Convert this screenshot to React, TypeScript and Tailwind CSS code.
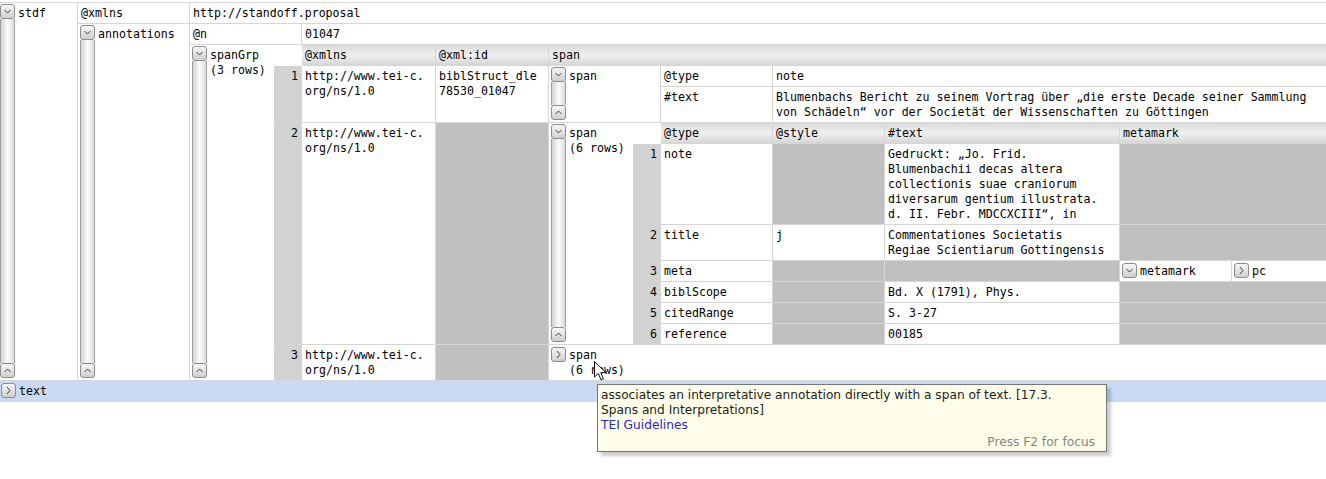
import React from "react";

const ln = "border-[#d6d6d6]";

function Chevron({ dir }: { dir: "down" | "up" | "right" }) {
  const pts =
    dir === "down" ? "3.5,5 6.5,8 9.5,5" : dir === "up" ? "3.5,8 6.5,5 9.5,8" : "5,3 8,6.5 5,10";
  return (
    <svg width="13" height="13" viewBox="0 0 13 13">
      <polyline points={pts} fill="none" stroke="#3c3c3c" strokeWidth="1" />
    </svg>
  );
}

function Btn({ dir }: { dir: "down" | "up" | "right" }) {
  return (
    <div className="w-[15px] h-[15px] shrink-0 rounded-[3px] border border-[#8c8c8c] bg-gradient-to-b from-[#f6f6f6] to-[#d0d0d0] flex items-center justify-center">
      <Chevron dir={dir} />
    </div>
  );
}

function Bar() {
  return (
    <div className="w-[15px] shrink-0 flex flex-col pt-[1px] pb-[2px]">
      <Btn dir="down" />
      <div className="flex-1 border-x border-[#9c9c9c] bg-gradient-to-r from-[#d2d2d2] via-[#fbfbfb] to-[#dcdcdc]" />
      <Btn dir="up" />
    </div>
  );
}

function Elem({ label, sub, className = "" }: { label: string; sub?: string; className?: string }) {
  return (
    <div className={`flex shrink-0 border-b ${ln} ${className}`}>
      <Bar />
      <div className="pl-[3px] pt-[3px] whitespace-nowrap">
        <div>{label}</div>
        {sub && <div>{sub}</div>}
      </div>
    </div>
  );
}

function Collapsed({ label, sub, dir = "right" }: { label: string; sub?: string; dir?: "down" | "right" }) {
  return (
    <div className="flex">
      <div className="pt-[2px] pl-[2px]">
        <Btn dir={dir} />
      </div>
      <div className="pl-[3px] pt-[3px] whitespace-nowrap">
        <div>{label}</div>
        {sub && <div>{sub}</div>}
      </div>
    </div>
  );
}

function Cell({ className = "", children }: { className?: string; children?: React.ReactNode }) {
  return (
    <div className={`border-r border-b ${ln} px-[3px] pt-[3px] pb-[2px] whitespace-nowrap ${className}`}>
      {children}
    </div>
  );
}

function Head({ className = "", children }: { className?: string; children?: React.ReactNode }) {
  return (
    <Cell className={`bg-gradient-to-b from-[#d9d9d9] via-[#efefef] to-[#d6d6d6] ${className}`}>{children}</Cell>
  );
}

function Gray({ className = "" }: { className?: string }) {
  return <div className={`border-r border-b ${ln} bg-[#c0c0c0] ${className}`} />;
}

function Num({ n }: { n: number }) {
  return <Cell className="w-[28px] shrink-0 bg-[#d2d2d2] text-right">{n}</Cell>;
}

function SpanTable() {
  const rows: { t: string; style?: string; text?: React.ReactNode; meta?: boolean }[] = [
    {
      t: "note",
      text: (
        <>
          Gedruckt: „Jo. Frid.
          <br />
          Blumenbachii decas altera
          <br />
          collectionis suae craniorum
          <br />
          diversarum gentium illustrata.
          <br />
          d. II. Febr. MDCCXCIII“, in
        </>
      ),
    },
    {
      t: "title",
      style: "j",
      text: (
        <>
          Commentationes Societatis
          <br />
          Regiae Scientiarum Gottingensis
        </>
      ),
    },
    { t: "meta", meta: true },
    { t: "biblScope", text: "Bd. X (1791), Phys." },
    { t: "citedRange", text: "S. 3-27" },
    { t: "reference", text: "00185" },
  ];
  return (
    <div className="flex-1 flex flex-col">
      <div className="flex">
        <div className="w-[28px] shrink-0" />
        <Head className="w-[112px] shrink-0">@type</Head>
        <Head className="w-[112px] shrink-0">@style</Head>
        <Head className="w-[235px] shrink-0">#text</Head>
        <Head className="flex-1">metamark</Head>
      </div>
      {rows.map((r, i) => (
        <div key={i} className="flex">
          <Num n={i + 1} />
          <Cell className="w-[112px] shrink-0">{r.t}</Cell>
          {r.style ? <Cell className="w-[112px] shrink-0">{r.style}</Cell> : <Gray className="w-[112px] shrink-0" />}
          {r.text ? <Cell className="w-[235px] shrink-0">{r.text}</Cell> : <Gray className="w-[235px] shrink-0" />}
          {r.meta ? (
            <div className="flex-1 flex">
              <div className={`w-[112px] shrink-0 border-r border-b ${ln}`}>
                <Collapsed label="metamark" dir="down" />
              </div>
              <div className={`flex-1 border-r border-b ${ln}`}>
                <Collapsed label="pc" />
              </div>
            </div>
          ) : (
            <Gray className="flex-1" />
          )}
        </div>
      ))}
    </div>
  );
}

function SpanGrpTable() {
  return (
    <div className="flex-1 flex flex-col">
      <div className="flex">
        <div className="w-[28px] shrink-0" />
        <Head className="w-[134px] shrink-0">@xmlns</Head>
        <Head className="w-[113px] shrink-0">@xml:id</Head>
        <Head className="flex-1">span</Head>
      </div>

      <div className="flex">
        <Num n={1} />
        <Cell className="w-[134px] shrink-0">
          http://www.tei-c.
          <br />
          org/ns/1.0
        </Cell>
        <Cell className="w-[113px] shrink-0">
          biblStruct_dle
          <br />
          78530_01047
        </Cell>
        <div className="flex-1 flex">
          <Elem label="span" className={`w-[112px] border-r pl-[2px]`} />
          <div className="flex-1 flex flex-col">
            <div className="flex">
              <Cell className="w-[112px] shrink-0">@type</Cell>
              <Cell className="flex-1">note</Cell>
            </div>
            <div className="flex">
              <Cell className="w-[112px] shrink-0">#text</Cell>
              <Cell className="flex-1">
                Blumenbachs Bericht zu seinem Vortrag über „die erste Decade seiner Sammlung
                <br />
                von Schädeln“ vor der Societät der Wissenschaften zu Göttingen
              </Cell>
            </div>
          </div>
        </div>
      </div>

      <div className="flex">
        <Num n={2} />
        <Cell className="w-[134px] shrink-0">
          http://www.tei-c.
          <br />
          org/ns/1.0
        </Cell>
        <Gray className="w-[113px] shrink-0" />
        <div className="flex-1 flex">
          <Elem label="span" sub="(6 rows)" className="w-[84px] pl-[2px]" />
          <SpanTable />
        </div>
      </div>

      <div className="flex">
        <Num n={3} />
        <Cell className="w-[134px] shrink-0">
          http://www.tei-c.
          <br />
          org/ns/1.0
        </Cell>
        <Gray className="w-[113px] shrink-0" />
        <div className={`flex-1 border-r border-b ${ln}`}>
          <Collapsed label="span" sub="(6 rows)" />
        </div>
      </div>
    </div>
  );
}

export default function App() {
  return (
    <div className="w-[1326px] h-[479px] bg-white relative overflow-hidden text-black font-['DejaVu_Sans_Mono',monospace] text-[11.6px] leading-[15px]">
      <div className={`w-[1327px] mt-[2px] border-t ${ln}`}>
        <div className="flex">
          <Elem label="stdf" className="w-[78px] border-r" />
          <div className="flex-1 flex flex-col">
            <div className="flex">
              <Cell className="w-[112px] shrink-0">@xmlns</Cell>
              <Cell className="flex-1">http://standoff.proposal</Cell>
            </div>
            <div className="flex">
              <Elem label="annotations" className="w-[112px] border-r pl-[2px]" />
              <div className="flex-1 flex flex-col">
                <div className="flex">
                  <Cell className="w-[112px] shrink-0">@n</Cell>
                  <Cell className="flex-1">01047</Cell>
                </div>
                <div className="flex">
                  <Elem label="spanGrp" sub="(3 rows)" className="w-[84px] pl-[2px]" />
                  <SpanGrpTable />
                </div>
              </div>
            </div>
          </div>
        </div>
        <div className={`flex h-[21px] bg-[#c9dbf3] border-b ${ln}`}>
          <div className="pt-[2px] pl-[1px]">
            <Btn dir="right" />
          </div>
          <div className="pl-[3px] pt-[3px]">text</div>
        </div>
      </div>

      {/* mouse pointer */}
      <svg className="absolute left-[594px] top-[361px]" width="14" height="21" viewBox="0 0 14 21">
        <path
          d="M0.5,0.5 L0.5,16 L4.3,12.4 L7,18.8 L9.4,17.8 L6.8,11.6 L11.8,11.6 Z"
          fill="#fff"
          stroke="#111"
          strokeWidth="1"
          strokeLinejoin="round"
        />
      </svg>

      {/* tooltip */}
      <div className="absolute left-[597px] top-[384px] w-[510px] h-[68px] bg-[#fdfde9] border border-[#777] shadow-[4px_4px_3px_rgba(0,0,0,0.2)] font-['DejaVu_Sans',sans-serif] text-[12.2px] leading-[15px] text-[#1e1e1e] px-[3px] pt-[3px]">
        <div>associates an interpretative annotation directly with a span of text. [17.3.</div>
        <div>Spans and Interpretations]</div>
        <div className="text-[#2828c8]">TEI Guidelines</div>
        <div className="text-right text-[#858585] pr-[8px] mt-[2px]">Press F2 for focus</div>
      </div>
    </div>
  );
}
